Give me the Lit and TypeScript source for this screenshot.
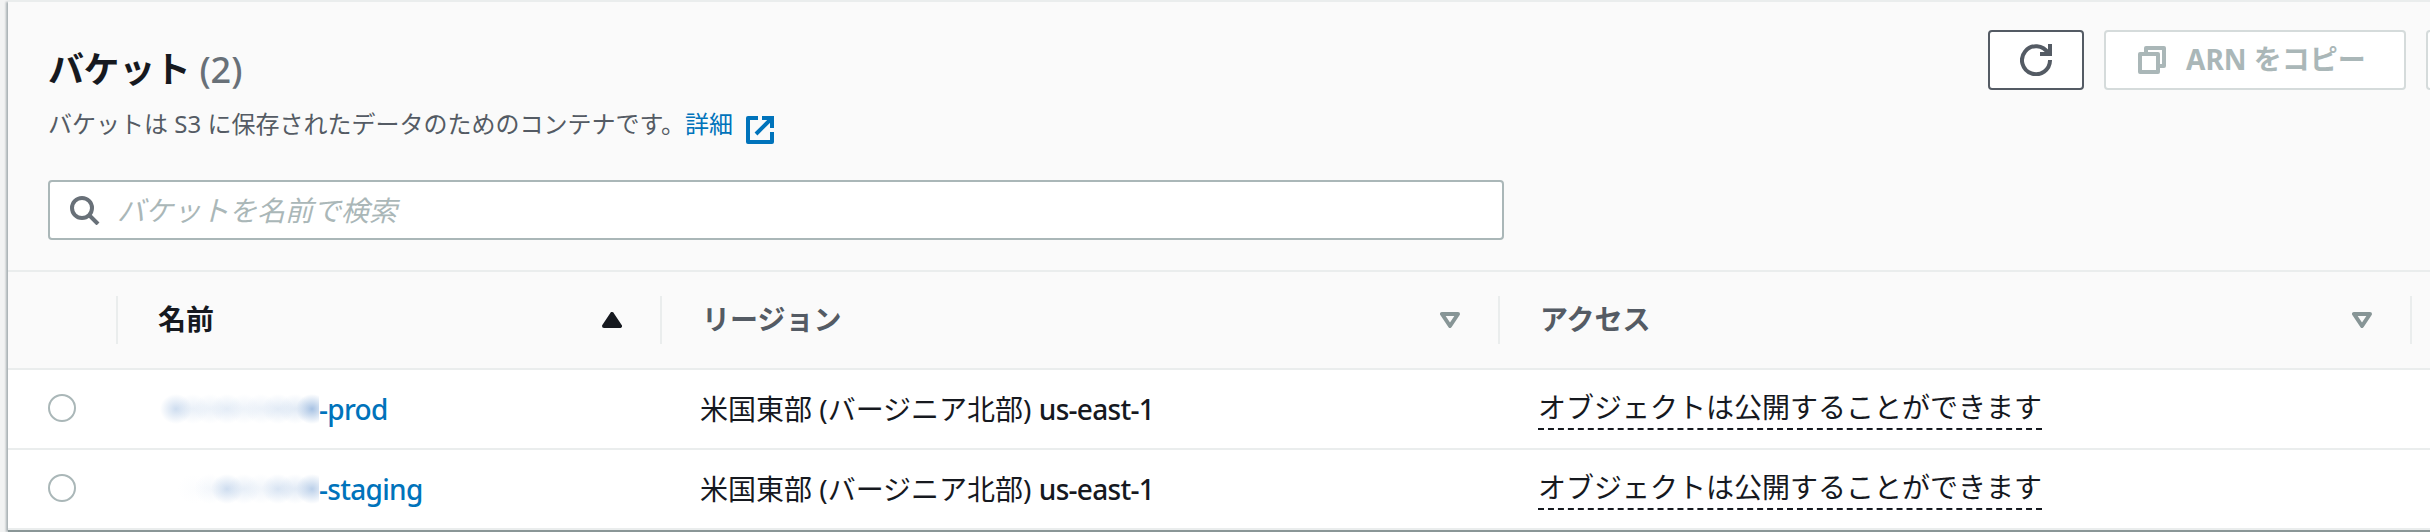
import { LitElement, html, css } from "lit";
import { customElement } from "lit/decorators.js";

interface Bucket { hidden: number[]; suffix: string; region: string; access: string; }

const buckets: Bucket[] = [
  { hidden: [0.5, 0.22, 0.2, 0.28, 0.18, 0.2, 0.3, 0.3, 0.9], suffix: "-prod", region: "米国東部 (バージニア北部) ", access: "オブジェクトは公開することができます" },
  { hidden: [0, 0.03, 0.12, 0.5, 0.25, 0.15, 0.4, 0.3, 0.7], suffix: "-staging", region: "米国東部 (バージニア北部) ", access: "オブジェクトは公開することができます" },
];

const sortIcon = html`<svg class="sort" width="20" height="16" viewBox="0 0 20 16">
  <path d="M2 2H18L10 14Z" fill="none" stroke="#879596" stroke-width="4" stroke-linejoin="round"/></svg>`;
const sortedIcon = html`<svg class="sort" width="20" height="16" viewBox="0 0 20 16">
  <path d="M10 2L18 14H2Z" fill="#16191f" stroke="#16191f" stroke-width="4" stroke-linejoin="round"/></svg>`;
const refreshIcon = html`<svg width="32" height="32" viewBox="0 0 32 32" fill="none" stroke="#545b64" stroke-width="4">
  <path d="M30 16A14 14 0 1 1 28 9"/><path d="M20 10H30V0"/></svg>`;
const copyIcon = html`<svg width="28" height="28" viewBox="0 0 28 28" fill="none" stroke="#aab7b8" stroke-width="4" stroke-linejoin="round">
  <path d="M2 8H20V26H2Z"/><path d="M8 7V2H26V20H21"/></svg>`;
const externalIcon = html`<svg class="ext" width="28" height="28" viewBox="0 0 28 28" fill="none" stroke="#0073bb" stroke-width="4">
  <path d="M12 2H2V26H26V16" stroke-linejoin="round"/><path d="M16 2H26V12M26 2L10 18"/></svg>`;
const searchIcon = html`<svg width="30" height="30" viewBox="0 0 30 30" fill="none" stroke="#687078" stroke-width="4">
  <circle cx="12" cy="13" r="10"/><path d="M19 20L28 29"/></svg>`;

@customElement("app-root")
export class AppRoot extends LitElement {
  static styles = css`
    :host { display: block; height: 532px; overflow: hidden; background: #f2f3f3;
      font-family: "Noto Sans", "Noto Sans CJK JP", sans-serif; font-size: 28px; line-height: 44px; color: #16191f; }
    * { box-sizing: border-box; }
    svg { flex: none; display: block; }
    .panel { margin-left: 8px; width: 2600px; height: 530px; background: #fff; border-top: 2px solid #eaeded;
      box-shadow: 0 2px 0 #8a9697, 2px 2px 2px 0 rgba(0,28,36,.15), -2px 2px 2px 0 rgba(0,28,36,.3); }
    .top { height: 268px; padding: 28px 0 0 40px; background: #fafafa; }
    .bar { display: flex; height: 150px; }
    .titles { width: 1940px; flex: none; }
    h2 { margin: 17px 0 0; font-size: 36px; line-height: 46px; font-weight: 700; white-space: pre; letter-spacing: -.4px; }
    .count { color: #687078; font-weight: 500; letter-spacing: 0; }
    .desc { margin: 13px 0 0; display: flex; font-size: 24px; line-height: 36px; color: #545b64; white-space: pre; }
    .link { color: #0073bb; text-decoration: none; display: flex; }
    .ext { margin: 10px 0 0 13px; }
    .btn { height: 60px; background: #fff; border: 2px solid #545b64; border-radius: 4px; display: flex; align-items: center; flex: none; }
    .refresh { width: 96px; justify-content: center; }
    .copy { margin-left: 20px; width: 302px; padding-left: 32px; border-color: #d5dbdb; color: #aab7b8; font-weight: 700; white-space: pre; }
    .copy span { margin-left: 20px; margin-top: -2px; }
    .next { margin-left: 20px; width: 200px; border-color: #d5dbdb; }
    .search { width: 1456px; height: 60px; background: #fff; border: 2px solid #aab7b8; border-radius: 4px; display: flex; align-items: center; padding-left: 20px; }
    .placeholder { margin-left: 17px; font-style: italic; color: #aab7b8; }
    .row { display: grid; grid-template-columns: 108px 544px 838px 912px 1fr; height: 80px; border-bottom: 2px solid #eaeded; }
    .head { height: 100px; border-top: 2px solid #eaeded; background: #fafafa; font-weight: 700; color: #545b64; align-items: center; }
    .h { height: 48px; border-left: 2px solid #eaeded; padding-left: 40px; display: flex; align-items: center; justify-content: space-between; }
    .label { margin-top: -2px; }
    .sorted { color: #16191f; }
    .sort { margin-right: 38px; }
    .radio { width: 28px; height: 28px; border: 2px solid #aab7b8; border-radius: 50%; margin: 24px 0 0 40px; }
    .name { padding: 17px 0 0 40px; color: #0073bb; display: flex; font-weight: 500; letter-spacing: -.7px; }
    .redacted { width: 163px; height: 44px; padding-left: 4px; display: flex; align-items: center; overflow: hidden; }
    .smudge { width: 32px; height: 30px; margin-right: -15px; background: radial-gradient(closest-side, #9dbbe0, transparent); flex: none; }
    .region { padding: 17px 0 0 40px; white-space: pre; }
    .code { font-weight: 500; letter-spacing: -.7px; }
    .access { padding: 15px 0 0 40px; }
    .hint { display: inline-block; height: 45px; border-bottom: 2px dashed #16191f; }
  `;

  render() {
    return html`<section class="panel">
      <header class="top">
        <div class="bar">
          <div class="titles">
            <h2>バケット <span class="count">(2)</span></h2>
            <p class="desc">バケットは S3 に保存されたデータのためのコンテナです。<a class="link">詳細${externalIcon}</a></p>
          </div>
          <div class="btn refresh">${refreshIcon}</div>
          <div class="btn copy">${copyIcon}<span>ARN をコピー</span></div>
          <div class="btn next"></div>
        </div>
        <div class="search">${searchIcon}<span class="placeholder">バケットを名前で検索</span></div>
      </header>
      <div class="row head"><span></span>
        <div class="h sorted"><span class="label">名前</span>${sortedIcon}</div>
        <div class="h"><span class="label">リージョン</span>${sortIcon}</div>
        <div class="h"><span class="label">アクセス</span>${sortIcon}</div>
        <div class="h"></div></div>
      ${buckets.map(b => html`<div class="row">
        <div class="radio"></div>
        <div class="name"><span class="redacted">${b.hidden.map(o => html`<i class="smudge" style="opacity:${o}"></i>`)}</span>${b.suffix}</div>
        <div class="region">${b.region}<span class="code">us-east-1</span></div>
        <div class="access"><span class="hint">${b.access}</span></div><span></span></div>`)}
    </section>`;
  }
}
